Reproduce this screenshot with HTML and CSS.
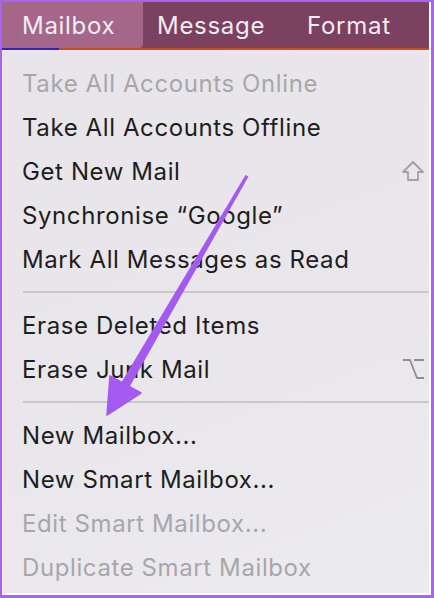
FILE: index.html
```html
<!DOCTYPE html>
<html>
<head>
<meta charset="utf-8">
<link rel="stylesheet" href="styles.css">
</head>
<body>
<div class="frame">
  <div class="screen">
    <div class="menubar">
      <div class="mb-item active">Mailbox</div>
      <div class="mb-item">Message</div>
      <div class="mb-item">Format</div>
    </div>
    <div class="underline"><div class="ul-blue"></div><div class="ul-orange"></div></div>
    <div class="menu">
      <div class="row disabled"><span>Take All Accounts Online</span></div>
      <div class="row"><span>Take All Accounts Offline</span></div>
      <div class="row"><span>Get New Mail</span>
        <svg class="key" width="24" height="22" viewBox="0 0 24 22"><path d="M12 2 L2 12 L7 12 L7 20 L17 20 L17 12 L22 12 Z" fill="none" stroke="#a3a1a6" stroke-width="1.8" stroke-linejoin="round"/></svg>
      </div>
      <div class="row"><span>Synchronise “Google”</span></div>
      <div class="row"><span>Mark All Messages as Read</span></div>
      <div class="sep"></div>
      <div class="row"><span>Erase Deleted Items</span></div>
      <div class="row"><span>Erase Junk Mail</span>
        <svg class="key" width="24" height="22" viewBox="0 0 24 22"><path d="M2 2 L9 2 L16 20 L23 20 M13 2 L23 2" fill="none" stroke="#8f8d92" stroke-width="1.8" stroke-linejoin="round"/></svg>
      </div>
      <div class="sep"></div>
      <div class="row"><span>New Mailbox...</span></div>
      <div class="row"><span>New Smart Mailbox...</span></div>
      <div class="row disabled"><span>Edit Smart Mailbox...</span></div>
      <div class="row disabled"><span>Duplicate Smart Mailbox</span></div>
    </div>
  </div>
  <svg class="arrow" width="434" height="598" viewBox="0 0 434 598">
    <path d="M245.5 175 L248.5 176.5 L129.5 387 L121 383 Z" fill="#a45af0"/>
    <path d="M107 415 L110 376 L141 393 Z" fill="#a45af0" stroke="#a45af0" stroke-width="1.5" stroke-linejoin="round"/>
  </svg>
</div>
</body>
</html>
```

FILE: styles.css
```css
html, body {
  margin: 0;
  padding: 0;
}
body {
  width: 434px;
  height: 598px;
  overflow: hidden;
  font-family: Inter, "Noto Sans", "Liberation Sans", sans-serif;
}
.frame {
  position: relative;
  width: 434px;
  height: 598px;
  box-sizing: border-box;
  padding: 2px 3px 3px 2px;
  background: #a864ef;
}
.screen {
  height: 100%;
  box-sizing: border-box;
  border-right: 2px solid #ffffff;
  border-bottom: 2px solid #ffffff;
  background: linear-gradient(160deg, #e7e5ea 0%, #e9e7ec 60%, #ecebef 100%);
  display: flex;
  flex-direction: column;
}
.menubar {
  height: 46px;
  background: #7c4060;
  display: flex;
  align-items: stretch;
}
.mb-item {
  color: #f3ecf1;
  font-size: 24px;
  letter-spacing: 0.7px;
  display: flex;
  align-items: center;
  white-space: nowrap;
}
.mb-item.active {
  background: #a4678a;
  width: 141px;
  box-sizing: border-box;
  padding-left: 20px;
  border-bottom-right-radius: 4px;
}
.mb-item + .mb-item {
  padding-left: 14px;
  padding-right: 28px;
}
.underline {
  height: 2px;
  display: flex;
}
.ul-blue {
  width: 57px;
  background: #3a22b4;
}
.ul-orange {
  flex: 1;
  background: #d04b1c;
}
.menu {
  padding-top: 11px;
  display: flex;
  flex-direction: column;
}
.row {
  height: 44px;
  display: flex;
  align-items: center;
  justify-content: space-between;
  padding: 0 4px 0 20px;
  font-size: 24px;
  letter-spacing: 0.6px;
  color: #1e1d20;
  white-space: nowrap;
}
.row.disabled {
  color: #a8a6ab;
}
.key {
  display: block;
}
.sep {
  height: 22px;
  display: flex;
  align-items: center;
  padding-left: 21px;
}
.sep::after {
  content: "";
  flex: 1;
  height: 1.5px;
  background: #c9c7cc;
}
.arrow {
  position: absolute;
  left: 0;
  top: 0;
  pointer-events: none;
}
```
